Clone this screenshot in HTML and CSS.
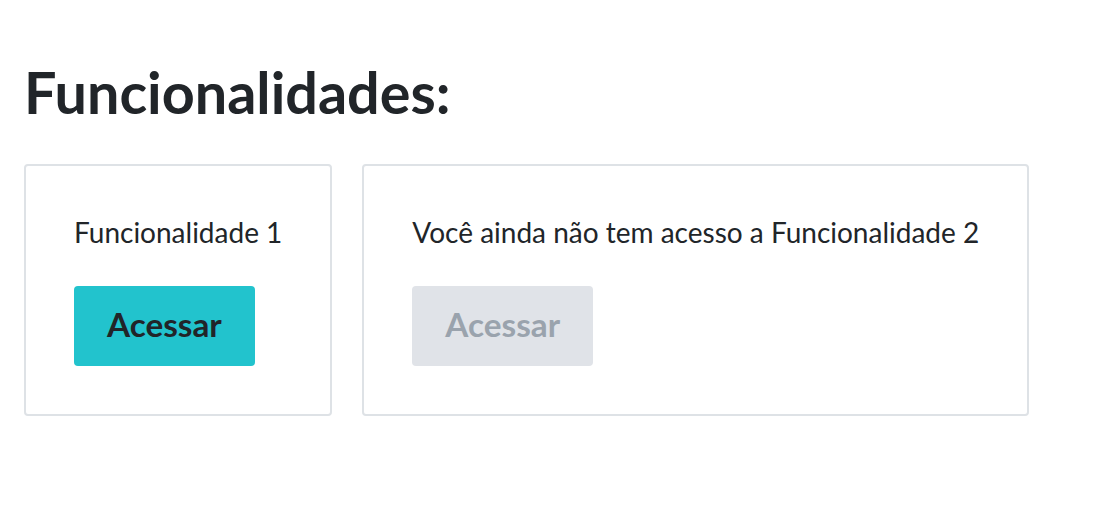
FILE: index.html
```html
<!DOCTYPE html>
<html lang="pt-BR">
<head>
<meta charset="utf-8">
<link rel="stylesheet" href="styles.css">
<title>Funcionalidades</title>
</head>
<body>
<main class="page">
  <h1 class="title">Funcionalidades:</h1>
  <div class="cards">
    <section class="card">
      <p class="card-text">Funcionalidade 1</p>
      <button class="btn btn-primary" type="button">Acessar</button>
    </section>
    <section class="card">
      <p class="card-text">Você ainda não tem acesso a Funcionalidade 2</p>
      <button class="btn btn-disabled" type="button" disabled>Acessar</button>
    </section>
  </div>
</main>
</body>
</html>
```
FILE: styles.css
```css
html, body {
  margin: 0;
  padding: 0;
  background: #ffffff;
}
body {
  font-family: Lato, "Noto Sans", sans-serif;
  color: #212529;
}
.page {
  padding: 58px 24px 0 24px;
}
.title {
  margin: 0 0 38px 0;
  font-size: 57.5px;
  font-weight: 700;
  line-height: 68px;
  color: #212529;
}
.cards {
  display: flex;
  align-items: flex-start;
  gap: 30px;
}
.card {
  border: 2px solid #dee2e6;
  border-radius: 4px;
  padding: 48px;
}
.card-text {
  margin: 0 0 36px 0;
  font-size: 28px;
  line-height: 36px;
}
.btn {
  display: block;
  border: none;
  border-radius: 4px;
  padding: 22px 33px 26px 33px;
  font-family: inherit;
  font-size: 33.3px;
  font-weight: 700;
  line-height: 32px;
}
.btn-primary {
  background: #22c3cd;
  color: #212529;
}
.btn-disabled {
  background: #e0e3e8;
  color: #9aa3ad;
}
```
